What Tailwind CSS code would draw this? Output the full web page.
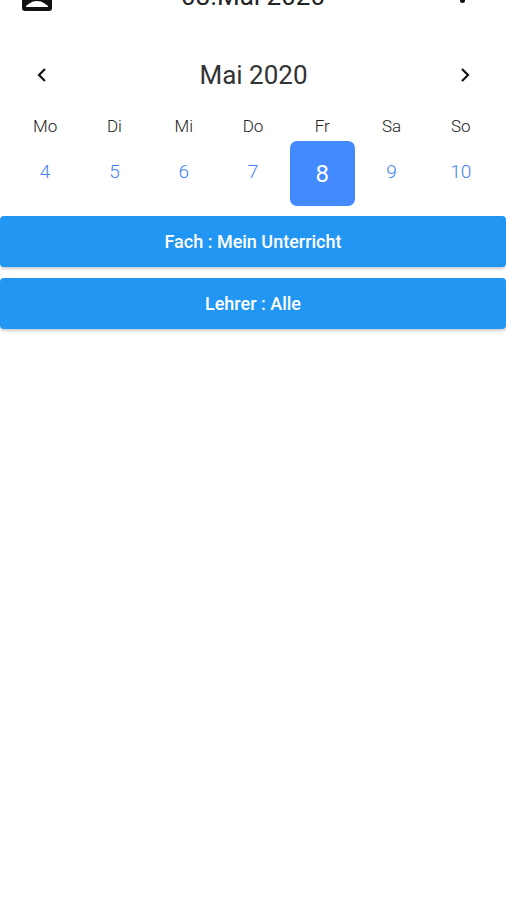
<!DOCTYPE html>
<html lang="de">
<head>
  <meta charset="UTF-8">
  <meta name="viewport" content="width=device-width, initial-scale=1.0">
  <title>Stundenplan</title>
  <script src="https://cdn.jsdelivr.net/npm/@tailwindcss/browser@4"></script>
</head>
<body class="bg-white h-[900px] overflow-hidden font-['Roboto',sans-serif]">

  <!-- Top bar, scrolled partly out of view -->
  <div class="h-[44px] -mt-[33px] pl-[22px] pr-[41px] flex items-end justify-between">
    <svg class="w-[30px] h-[30px] block" viewBox="0 0 30 30">
      <rect x="0" y="0" width="30" height="30" rx="3" fill="#111"/>
      <path d="M4 26 L4 25 C6 23.5 8.5 21.5 11 20.5 C13 19.8 17 19.8 19 20.5 C21.5 21.5 24 23.5 26 25 L26 26 Z" fill="#fff"/>
    </svg>
    <span class="text-[26px] leading-[30px] text-[#222] mr-[6px]">08.Mai 2020</span>
    <span class="w-[5px] h-[5px] mb-[8px] rounded-full bg-[#111]"></span>
  </div>

  <!-- Month switcher -->
  <div class="h-[40px] mt-[44px] pl-[35px] pr-[34px] flex items-center justify-between">
    <svg class="w-[13px] h-[16px]" viewBox="0 0 13 16" fill="none">
      <path d="M10 2 L4 8 L10 14" stroke="#111" stroke-width="2.2"/>
    </svg>
    <span class="text-[26px] leading-[30px] text-[#333]">Mai 2020</span>
    <svg class="w-[13px] h-[16px]" viewBox="0 0 13 16" fill="none">
      <path d="M3 2 L9 8 L3 14" stroke="#111" stroke-width="2.2"/>
    </svg>
  </div>

  <!-- Week -->
  <div class="grid grid-cols-7 px-[10.5px] mt-[21px] text-center">
    <span class="h-[20px] text-[17px] leading-[20px] font-light text-[#222]">Mo</span>
    <span class="h-[20px] text-[17px] leading-[20px] font-light text-[#222]">Di</span>
    <span class="h-[20px] text-[17px] leading-[20px] font-light text-[#222]">Mi</span>
    <span class="h-[20px] text-[17px] leading-[20px] font-light text-[#222]">Do</span>
    <span class="h-[20px] text-[17px] leading-[20px] font-light text-[#222]">Fr</span>
    <span class="h-[20px] text-[17px] leading-[20px] font-light text-[#222]">Sa</span>
    <span class="h-[20px] text-[17px] leading-[20px] font-light text-[#222]">So</span>
  </div>
  <div class="grid grid-cols-7 px-[10.5px] mt-[5px] h-[65px] items-center justify-items-center text-[19px] font-light text-[#3f83f5]">
    <span class="-mt-[3px]">4</span>
    <span class="-mt-[3px]">5</span>
    <span class="-mt-[3px]">6</span>
    <span class="-mt-[3px]">7</span>
    <span class="w-[65px] h-[65px] rounded-[7px] bg-[#448aff] text-white text-[24px] font-normal flex items-center justify-center">8</span>
    <span class="-mt-[3px]">9</span>
    <span class="-mt-[3px]">10</span>
  </div>

  <!-- Filter buttons -->
  <div class="mt-[10px] flex flex-col gap-[11px]">
    <button class="h-[51px] w-full rounded-[4px] bg-[#2196f3] text-white text-[18px] font-medium shadow-[0_2px_3px_rgba(0,0,0,0.2)]">Fach : Mein Unterricht</button>
    <button class="h-[51px] w-full rounded-[4px] bg-[#2196f3] text-white text-[18px] font-medium shadow-[0_2px_3px_rgba(0,0,0,0.2)]">Lehrer : Alle</button>
  </div>

</body>
</html>
